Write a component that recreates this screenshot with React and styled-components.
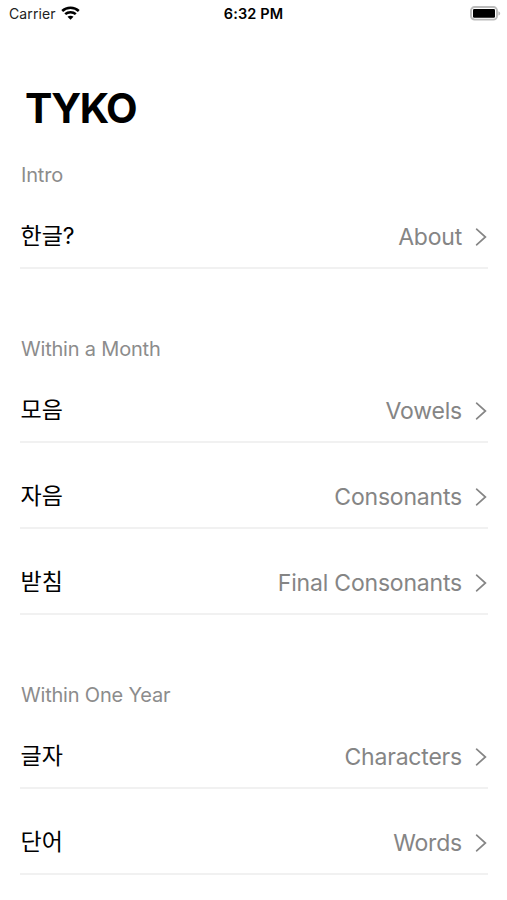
import React from "react";
import styled, { createGlobalStyle } from "styled-components";

const sections = [
  { title: "Intro", rows: [{ name: "한글?", label: "About" }] },
  {
    title: "Within a Month",
    rows: [
      { name: "모음", label: "Vowels" },
      { name: "자음", label: "Consonants" },
      { name: "받침", label: "Final Consonants" },
    ],
  },
  {
    title: "Within One Year",
    rows: [
      { name: "글자", label: "Characters" },
      { name: "단어", label: "Words" },
    ],
  },
];

const WifiIcon = () => (
  <svg width="19" height="14" viewBox="0 0 19 14" fill="none" stroke="#000" strokeWidth="2.5">
    <path d="M1.2 5C5.6 0.6 13.4 0.6 17.8 5" />
    <path d="M4.2 8.2C7 5.5 12 5.5 14.8 8.2" />
    <path d="M6.5 10.8C8 9.4 11 9.4 12.5 10.8L9.5 13.8Z" fill="#000" stroke="none" />
  </svg>
);

const BatteryIcon = () => (
  <svg width="31" height="15" viewBox="0 0 31 15">
    <rect x="1" y="1" width="26" height="12.6" rx="3.6" fill="none" stroke="#bbb" strokeWidth="1.9" />
    <rect x="3" y="3" width="22" height="8.8" rx="1.2" fill="#000" />
    <path d="M28.4 5.2C30.8 6 30.8 8.8 28.4 9.6Z" fill="#bbb" />
  </svg>
);

const Chevron = () => (
  <svg width="12" height="18" viewBox="0 0 12 18" fill="none" stroke="#858585" strokeWidth="1.7">
    <path d="M1.6 1.2L10.4 9L1.6 16.8" strokeLinecap="round" strokeLinejoin="miter" />
  </svg>
);

const App = () => {
  return (
    <>
      <GlobalStyle />
      <Screen>
        <StatusBar>
          <Carrier>
            <span>Carrier</span>
            <WifiIcon />
          </Carrier>
          <Clock>6:32 PM</Clock>
          <Battery>
            <BatteryIcon />
          </Battery>
        </StatusBar>
        <Title>TYKO</Title>
        {sections.map((section) => (
          <Section key={section.title}>
            <SectionTitle>{section.title}</SectionTitle>
            {section.rows.map((row) => (
              <Row key={row.label}>
                <Name>{row.name}</Name>
                <Label>{row.label}</Label>
                <Chevron />
              </Row>
            ))}
          </Section>
        ))}
      </Screen>
    </>
  );
};

const GlobalStyle = createGlobalStyle`
  * {
    box-sizing: border-box;
  }
  body {
    margin: 0;
    background-color: #fff;
    font-family: Inter, "Noto Sans CJK KR", sans-serif;
  }
`;

const Screen = styled.main`
  height: 900px;
  overflow: hidden;
`;

const StatusBar = styled.header`
  display: grid;
  grid-template-columns: 1fr auto 1fr;
  align-items: center;
  height: 27px;
  padding: 0 6px;
  font-size: 14px;
`;

const Carrier = styled.div`
  display: flex;
  align-items: center;
  gap: 5px;
  padding-left: 3px;
  letter-spacing: 0.1px;
  color: #222;
  svg {
    margin-bottom: 1px;
  }
`;

const Clock = styled.div`
  font-weight: 600;
  font-size: 14.5px;
  letter-spacing: 0.15px;
`;

const Battery = styled.div`
  display: flex;
  justify-content: flex-end;
`;

const Title = styled.h1`
  margin: 56px 0 1px 25px;
  font-size: 41px;
  line-height: 50px;
  font-weight: 700;
  letter-spacing: -1.5px;
`;

const Section = styled.section`
  padding: 33px 19px 43px 20px;
  & + & {
    padding-top: 29px;
  }
`;

const SectionTitle = styled.h2`
  margin: 0;
  padding-left: 1px;
  font-size: 20px;
  line-height: 16px;
  font-weight: 400;
  letter-spacing: -0.2px;
  color: #8c8c8c;
`;

const Row = styled.div`
  display: flex;
  align-items: center;
  height: 86px;
  padding: 24px 1px 0 0;
  border-bottom: 2px solid #f1f1f1;
`;

const Name = styled.span`
  flex: 1;
  padding: 0 0 6px 0.5px;
  font-size: 23px;
  color: #000;
`;

const Label = styled.span`
  margin-right: 13px;
  font-size: 23px;
  letter-spacing: -0.2px;
  color: #858585;
`;

export default App;
